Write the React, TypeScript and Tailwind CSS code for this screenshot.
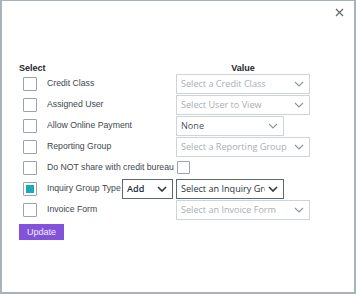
import React from 'react';

const labelFont = { fontFamily: '"Liberation Sans", Arial, sans-serif' };
const selectFont = { fontFamily: '"Open Sans", "Noto Sans", sans-serif' };

const Chevron: React.FC<{ dark?: boolean }> = ({ dark }) => (
  <svg width="10" height="6" viewBox="0 0 10 6" className="shrink-0">
    <polyline
      points="1,1 5,5 9,1"
      fill="none"
      stroke={dark ? '#2b3640' : '#8d959c'}
      strokeWidth={dark ? 1.6 : 1.1}
    />
  </svg>
);

interface SelectBoxProps {
  text: string;
  width: string;
  placeholder?: boolean;
  dark?: boolean;
  bold?: boolean;
}

const SelectBox: React.FC<SelectBoxProps> = ({ text, width, placeholder, dark, bold }) => (
  <div
    className={`flex h-[20px] items-center gap-[3px] border bg-white pl-[4px] pr-[5px] ${width} ${
      dark ? 'border-[#5d6872]' : 'border-[#cfd4d8]'
    }`}
  >
    <span
      className={`min-w-0 flex-1 overflow-hidden whitespace-nowrap text-[9.1px] leading-[13px] ${
        placeholder ? 'text-[#a9aeb3]' : dark ? 'text-[#26313b]' : 'text-[#4d5459]'
      } ${bold ? 'font-semibold' : ''}`}
      style={selectFont}
    >
      {text}
    </span>
    <Chevron dark={dark} />
  </div>
);

const Checkbox: React.FC<{ checked?: boolean; size?: string }> = ({ checked, size = 'h-[14px] w-[14px]' }) => (
  <div
    className={`flex shrink-0 items-center justify-center rounded-[1px] border border-[#9aa4ab] bg-white ${size}`}
  >
    {checked && <div className="h-[8px] w-[8px] bg-[#1aaab7]" />}
  </div>
);

interface Row {
  label: string;
  value: React.ReactNode;
  checked?: boolean;
  inline?: React.ReactNode;
}

const rows: Row[] = [
  { label: 'Credit Class', value: <SelectBox text="Select a Credit Class" width="w-[134px]" placeholder /> },
  { label: 'Assigned User', value: <SelectBox text="Select User to View" width="w-[134px]" placeholder /> },
  { label: 'Allow Online Payment', value: <SelectBox text="None" width="w-[108px]" /> },
  { label: 'Reporting Group', value: <SelectBox text="Select a Reporting Group" width="w-[134px]" placeholder /> },
  {
    label: 'Do NOT share with credit bureau',
    value: (
      <div className="ml-[1px]">
        <Checkbox size="h-[13px] w-[13px]" />
      </div>
    ),
  },
  {
    label: 'Inquiry Group Type',
    checked: true,
    inline: <SelectBox text="Add" width="w-[51px]" dark bold />,
    value: <SelectBox text="Select an Inquiry Group" width="w-[108px]" dark />,
  },
  { label: 'Invoice Form', value: <SelectBox text="Select an Invoice Form" width="w-[134px]" placeholder /> },
];

export default function App() {
  return (
    <div className="h-[294px] w-[356px] border-t border-r-2 border-b-2 border-l-2 border-[#a8b2b9] bg-white">
      {/* header */}
      <div className="flex justify-end pt-[7px] pr-[10px]">
        <svg width="9" height="9" viewBox="0 0 9 9">
          <path d="M1 1 L8 8 M8 1 L1 8" stroke="#5f666c" strokeWidth="1.2" />
        </svg>
      </div>

      <div className="pl-[17px] pt-[44px]">
        <div className="flex h-[12px] items-end text-[9px] font-bold leading-none text-[#22282d]" style={labelFont}>
          <span className="w-[157px]">Select</span>
          <span className="w-[134px] text-center">Value</span>
        </div>

        <div className="flex flex-col">
          {rows.map((row) => (
            <div key={row.label} className="flex h-[21px] items-center pl-[4px]">
              <Checkbox checked={row.checked} />
              <div className="ml-[10px] flex w-[129px] items-center justify-between pr-[3px]">
                <span className="whitespace-nowrap text-[8.7px] text-[#40474d]" style={labelFont}>
                  {row.label}
                </span>
                {row.inline}
              </div>
              {row.value}
            </div>
          ))}
        </div>

        <button
          className="mt-[4px] flex h-[16px] w-[45px] items-center justify-center bg-[#8252dc] text-[9px] leading-none text-[#f3eeff]"
          style={labelFont}
        >
          Update
        </button>
      </div>
    </div>
  );
}
